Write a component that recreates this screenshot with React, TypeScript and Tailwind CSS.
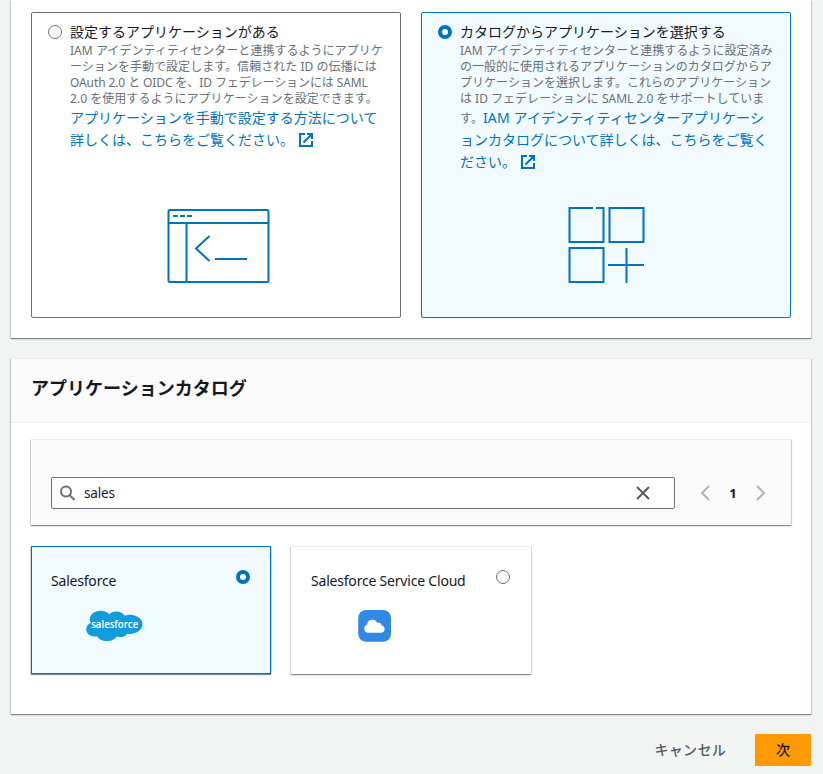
import type { ReactNode } from 'react';

function Line({ className = '', children }: { className?: string; children: ReactNode }) {
  return (
    <div className="whitespace-nowrap">
      <span className={className}>{children}</span>
    </div>
  );
}

function Radio({ checked }: { checked?: boolean }) {
  return (
    <svg width="14" height="14" viewBox="0 0 14 14" className="shrink-0">
      {checked ? (
        <circle cx="7" cy="7" r="5" fill="#fff" stroke="#0073bb" strokeWidth="4" />
      ) : (
        <circle cx="7" cy="7" r="6.5" fill="#fff" stroke="#687078" />
      )}
    </svg>
  );
}

function ExternalIcon() {
  return (
    <svg width="16" height="16" viewBox="0 0 16 16" fill="none" stroke="#0073bb" strokeWidth="2" className="shrink-0">
      <path d="M7 2H2v12h12V9" />
      <path d="M9 2h5v5M5.500 10.500 14 2" />
    </svg>
  );
}

function TerminalArt() {
  return (
    <svg width="104" height="76" viewBox="0 0 104 76" fill="none" stroke="#0073bb" strokeWidth="2">
      <rect x="1.500" y="2" width="100" height="72" rx="1.500" />
      <path d="M1.500 15h100M19.500 15v59M6 8h5M13 8h5M20 8h5M42.500 28 29 40.500 42.500 53M48 51h32" />
    </svg>
  );
}

function GridArt() {
  return (
    <svg width="78" height="78" viewBox="0 0 78 78" fill="none" stroke="#0073bb" strokeWidth="2">
      <path d="M26 2H2.500V36H36.500V2H29" />
      <rect x="42.500" y="2" width="34" height="34" />
      <rect x="2.500" y="42" width="34" height="34" />
      <path d="M59.500 42v35M41 59h36" />
    </svg>
  );
}

function SalesforceLogo() {
  return (
    <svg width="57" height="32" viewBox="0 0 57 32">
      <path
        fill="#139cdb"
        d="M23.300 4.200C25.200 2.300 27.800 1.600 30.500 1.600c3.600 0 6.700 1.600 8.400 4.200 1.600-.7 3.200-1.100 5-1.100 7 0 12.600 4.300 12.600 9.600s-5.600 9.600-12.600 9.600c-.9 0-1.700-.1-2.500-.2-1.400 2.100-4.100 3.400-7.200 3.400-1.300 0-2.500-.2-3.600-.6-1.500 2.800-5.300 4.600-9.700 4.600-4.600 0-8.400-1.900-9.900-4.800-.7.100-1.300.2-2 .2C4 26.500.200 23.200.2 19.200c0-2.800 1.700-5.100 4.500-6.300-.6-1-.9-2.100-.9-3.300C3.800 4.700 8.600.8 14.500.8c3.600 0 6.800 1.300 8.800 3.400z"
      />
      <text x="5.200" y="18" textLength="47" lengthAdjust="spacingAndGlyphs" fill="#fff" fontSize="11" fontWeight="600" fontFamily="'Open Sans', sans-serif">
        salesforce
      </text>
    </svg>
  );
}

function ServiceCloudLogo() {
  return (
    <svg width="34" height="32" viewBox="0 0 34 32">
      <rect x="0.200" y="0" width="32.800" height="31.800" rx="8" fill="#3089e3" />
      <path
        fill="#fff"
        d="M10.500 22.800a4.200 4.200 0 0 1-1.300-8.200 5.200 5.200 0 0 1 10-1.700 3.200 3.200 0 0 1 4.500 2.600 3.700 3.700 0 0 1-.5 7.300z"
      />
    </svg>
  );
}

const panel =
  'bg-white shadow-[0_1px_1px_0_rgba(0,28,36,0.3),1px_1px_1px_0_rgba(0,28,36,0.15),-1px_1px_1px_0_rgba(0,28,36,0.15)]';

export default function App() {
  return (
    <div className="h-[774px] w-[823px] overflow-hidden bg-[#f2f3f3] pl-[11px] pr-3 font-['Noto_Sans','Noto_Sans_CJK_JP',sans-serif] text-[14px] leading-[22px] text-[#16191f]">
      <section className={`${panel} flex h-[338px] gap-5 px-5 pt-3`}>
        <div className="flex h-[306px] w-[370px] flex-col rounded-[2px] border border-[#687078] bg-white pl-4 pt-2">
          <div className="flex gap-2">
            <div className="pt-1">
              <Radio />
            </div>
            <div className="h-[185px]">
              <Line>設定するアプリケーションがある</Line>
              <div className="text-[12px] leading-4 text-[#687078]">
                <Line className="tracking-[0.04px]">IAM アイデンティティセンターと連携するようにアプリケ</Line>
                <Line className="tracking-[0.04px]">ーションを手動で設定します。信頼された ID の伝播には</Line>
                <Line className="tracking-[-0.1px]">OAuth 2.0 と OIDC を、ID フェデレーションには SAML</Line>
                <Line className="tracking-[0.04px]">2.0 を使用するようにアプリケーションを設定できます。</Line>
              </div>
              <div className="text-[#0073bb]">
                <Line>アプリケーションを手動で設定する方法について</Line>
                <div className="flex items-center gap-1">
                  <Line>詳しくは、こちらをご覧ください。</Line>
                  <ExternalIcon />
                </div>
              </div>
            </div>
          </div>
          <div className="pl-[119px] pt-[2px]">
            <TerminalArt />
          </div>
        </div>
        <div className="flex h-[306px] w-[370px] flex-col rounded-[2px] border border-[#0073bb] bg-[#f1faff] pl-4 pt-2">
          <div className="flex gap-2">
            <div className="pt-1">
              <Radio checked />
            </div>
            <div className="h-[185px]">
              <Line>カタログからアプリケーションを選択する</Line>
              <div className="text-[12px] leading-4 text-[#687078]">
                <Line className="tracking-[0.03px]">IAM アイデンティティセンターと連携するように設定済み</Line>
                <Line>の一般的に使用されるアプリケーションのカタログからア</Line>
                <Line className="tracking-[0.03px]">プリケーションを選択します。これらのアプリケーション</Line>
                <Line>は ID フェデレーションに SAML 2.0 をサポートしていま</Line>
              </div>
              <div className="text-[#0073bb]">
                <div className="h-[22px]">
                  <Line className="tracking-[0.1px]">
                    <span className="text-[12px] text-[#687078]">す。</span>IAM アイデンティティセンターアプリケーシ
                  </Line>
                </div>
                <Line>ョンカタログについて詳しくは、こちらをご覧く</Line>
                <div className="flex items-center gap-1">
                  <Line>ださい。</Line>
                  <ExternalIcon />
                </div>
              </div>
            </div>
          </div>
          <div className="pl-[129px]">
            <GridArt />
          </div>
        </div>
      </section>

      <section className={`${panel} mt-5 h-[356px] border-t border-[#eaeded]`}>
        <header className="h-[64px] border-b border-[#eaeded] bg-[#fafafa] px-5 pt-[18px]">
          <h2 className="text-[18px] font-bold leading-[22px]">アプリケーションカタログ</h2>
        </header>
        <div className="px-5 pt-4">
          <div className={`${panel} flex h-[86px] items-start border-t border-[#eaeded] bg-[#fafafa]! px-5 pt-[37px]`}>
            <div className="flex h-8 w-[624px] items-center rounded-[2px] border border-[#687078] bg-white pl-[7px] pr-[23px]">
              <svg width="16" height="16" viewBox="0 0 16 16" fill="none" stroke="#687078" strokeWidth="2">
                <circle cx="7" cy="6.500" r="5" />
                <path d="m10.500 10 5 5" />
              </svg>
              <span className="ml-[9px] flex-1 text-[13.500px] tracking-[-0.15px]">sales</span>
              <svg width="16" height="16" viewBox="0 0 16 16" fill="none" stroke="#545b64" strokeWidth="2">
                <path d="m2 2 12 12M14 2 2 14" />
              </svg>
            </div>
            <div className="flex h-8 items-center pl-[22px]">
              <svg width="16" height="16" viewBox="0 0 16 16" fill="none" stroke="#aab7b8" strokeWidth="2">
                <path d="M12 1 5 8l7 7" />
              </svg>
              <span className="w-[40px] text-center text-[13px] font-bold">1</span>
              <svg width="16" height="16" viewBox="0 0 16 16" fill="none" stroke="#aab7b8" strokeWidth="2">
                <path d="m4 1 7 7-7 7" />
              </svg>
            </div>
          </div>
          <div className="mt-[21px] flex gap-5">
            <div className={`${panel} h-[128px] w-[240px] border border-[#0073bb] bg-[#f1faff]! pl-[19px] pr-5 pt-[23px]`}>
              <div className="flex items-start justify-between">
                <span className="tracking-[-0.2px]">Salesforce</span>
                <Radio checked />
              </div>
              <div className="pl-[35px] pt-[18px]">
                <SalesforceLogo />
              </div>
            </div>
            <div className={`${panel} h-[128px] w-[240px] border-t border-[#eaeded] pl-5 pr-[21px] pt-[23px]`}>
              <div className="flex items-start justify-between">
                <span className="tracking-[-0.2px]">Salesforce Service Cloud</span>
                <Radio />
              </div>
              <div className="pl-[47px] pt-[18px]">
                <ServiceCloudLogo />
              </div>
            </div>
          </div>
        </div>
      </section>

      <footer className="flex justify-end gap-[29px] pt-5 font-medium">
        <button className="tracking-[0.3px] text-[#545b64]">キャンセル</button>
        <button className="h-8 w-14 bg-[#ff9900]">次</button>
      </footer>
    </div>
  );
}
